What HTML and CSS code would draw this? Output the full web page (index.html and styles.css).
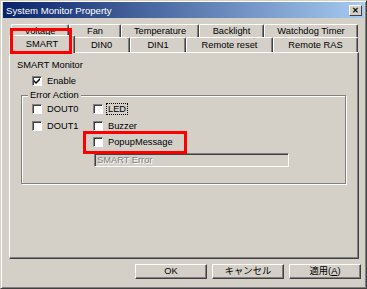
FILE: index.html
```html
<html>
<head>
<title>System Monitor Property</title>
<link rel="stylesheet" href="styles.css">
</head>
<body>

<div class="window">
	<div class="titlebar">
		<span class="title">System Monitor Property</span>
		<span class="close">&#x2715;</span>
	</div>

	<div class="body">
		<div class="tabrow back">
			<div class="tab voltage">Voltage</div>
			<div class="tab fan">Fan</div>
			<div class="tab temperature">Temperature</div>
			<div class="tab backlight">Backlight</div>
			<div class="tab watchdog">Watchdog Timer</div>
		</div>
		<div class="tabrow front">
			<div class="tab smart selected">SMART</div>
			<div class="tab din0">DIN0</div>
			<div class="tab din1">DIN1</div>
			<div class="tab remotereset">Remote reset</div>
			<div class="tab remoteras">Remote RAS</div>
		</div>

		<div class="panel">
			<div class="heading">SMART Monitor</div>
			<label class="check enable"><span class="box checked"><svg width="8" height="8" viewBox="0 0 8 8"><path d="M1 3 L3 5 L7 1 L7 3 L3 7 L1 5 Z" fill="#000"/></svg></span>Enable</label>

			<div class="group">
				<span class="legend">Error Action</span>
				<div class="grid">
					<label class="check"><span class="box"></span>DOUT0</label>
					<label class="check"><span class="box"></span><span class="focus">LED</span></label>
					<label class="check"><span class="box"></span>DOUT1</label>
					<label class="check"><span class="box"></span>Buzzer</label>
					<span></span>
					<label class="check"><span class="box"></span>PopupMessage</label>
					<span></span>
					<div class="field">SMART Error</div>
				</div>
			</div>
		</div>

		<div class="buttons">
			<div class="button">OK</div>
			<div class="button">キャンセル</div>
			<div class="button">適用(<u>A</u>)</div>
		</div>
	</div>

	<div class="mark markTab"></div>
	<div class="mark markPopup"></div>
</div>

</body>
</html>
```

FILE: styles.css
```css
body{
	margin: 0;
	font: 9.3px "Liberation Sans", "Noto Sans CJK JP", sans-serif;
	color: #000;
}
.window{
	position: relative;
	width: 367px;
	height: 289px;
	box-sizing: border-box;
	background: #d4d0c8;
	border: 1px solid;
	border-color: #d4d0c8 #404040 #404040 #d4d0c8;
	box-shadow: inset 1px 1px 0 #fff, inset -1px -1px 0 #808080;
	padding: 1px 2px 0 2px;
}
.titlebar{
	height: 16px;
	display: flex;
	align-items: center;
	justify-content: space-between;
	background: linear-gradient(to right, #0a246a, #a6caf0);
	padding: 0 2px 0 3px;
}
.title{
	color: #fff;
	font-size: 9.6px;
}
.close{
	width: 11px;
	height: 9px;
	display: flex;
	align-items: center;
	justify-content: center;
	background: #d4d0c8;
	border: 1px solid;
	border-color: #fff #404040 #404040 #fff;
	font-size: 8px;
	font-weight: bold;
	line-height: 9px;
}
.body{
	padding: 6px 0 0 6px;
}
.tabrow{
	display: flex;
	margin-left: 2px;
}
.tab{
	box-sizing: border-box;
	background: #d4d0c8;
	border-top: 1px solid #fff;
	border-left: 1px solid #fff;
	border-right: 1px solid #404040;
	box-shadow: inset -1px 0 0 #808080;
	border-radius: 2px 2px 0 0;
	text-align: center;
}
.back .tab{
	height: 13px;
	line-height: 12px;
}
.front .tab{
	height: 15px;
	line-height: 14px;
}
.voltage{ width: 58px; }
.fan{ width: 52px; }
.temperature{ width: 78px; }
.backlight{ width: 65px; }
.watchdog{ width: 94px; }
.smart{ width: 62px; }
.din0{ width: 57px; }
.din1{ width: 56px; }
.remotereset{ width: 87px; }
.remoteras{ width: 85px; }
.tab.selected{
	position: relative;
	z-index: 1;
	width: 66px;
	height: 18px;
	margin: -2px -2px -1px -2px;
	line-height: 17px;
}
.panel{
	box-sizing: border-box;
	width: 350px;
	height: 207px;
	border: 1px solid;
	border-color: #fff #404040 #404040 #fff;
	box-shadow: inset -1px -1px 0 #808080;
	padding: 7px 0 0 7px;
}
.heading{
	line-height: 11px;
}
.check{
	display: flex;
	align-items: center;
	height: 16.5px;
}
.enable{
	margin: 4px 0 0 15px;
	height: 11px;
}
.box{
	width: 8px;
	height: 8px;
	flex: none;
	background: #fff;
	border: 1px solid;
	border-color: #808080 #fff #fff #808080;
	box-shadow: inset 1px 1px 0 #404040;
	margin-right: 5px;
	display: flex;
	align-items: center;
	justify-content: center;
}
.focus{
	outline: 1px dotted #000;
	padding: 0 1px;
	margin-left: -1px;
}
.group{
	position: relative;
	margin: 9px 0 0 4px;
	padding: 5px 0 15.5px 10px;
	width: 325px;
	box-sizing: border-box;
	border: 1px solid #808080;
	box-shadow: 1px 1px 0 #fff, inset 1px 1px 0 #fff;
}
.legend{
	position: absolute;
	left: 6px;
	top: -6px;
	padding: 0 2px;
	background: #d4d0c8;
	line-height: 11px;
}
.grid{
	display: grid;
	grid-template-columns: 61px 1fr;
	grid-auto-rows: 16.5px;
}
.field{
	box-sizing: border-box;
	width: 195px;
	height: 14px;
	margin: 2px 0 0 1px;
	border: 1px solid;
	border-color: #808080 #fff #fff #808080;
	box-shadow: inset 1px 1px 0 #404040, inset -1px -1px 0 #d4d0c8;
	color: #808080;
	text-shadow: 1px 1px 0 #fff;
	padding-left: 2px;
	line-height: 12px;
}
.buttons{
	display: flex;
	justify-content: flex-end;
	gap: 5px;
	margin-top: 5px;
	padding-right: 3px;
}
.button{
	box-sizing: border-box;
	width: 72px;
	height: 15px;
	border: 1px solid;
	border-color: #fff #404040 #404040 #fff;
	box-shadow: inset -1px -1px 0 #808080;
	text-align: center;
	line-height: 13px;
}
.mark{
	position: absolute;
	border: 3px solid #f00;
	box-sizing: border-box;
	z-index: 2;
}
.markTab{
	left: 9px;
	top: 27px;
	width: 62px;
	height: 26px;
}
.markPopup{
	left: 82px;
	top: 130px;
	width: 104px;
	height: 23px;
}
```
